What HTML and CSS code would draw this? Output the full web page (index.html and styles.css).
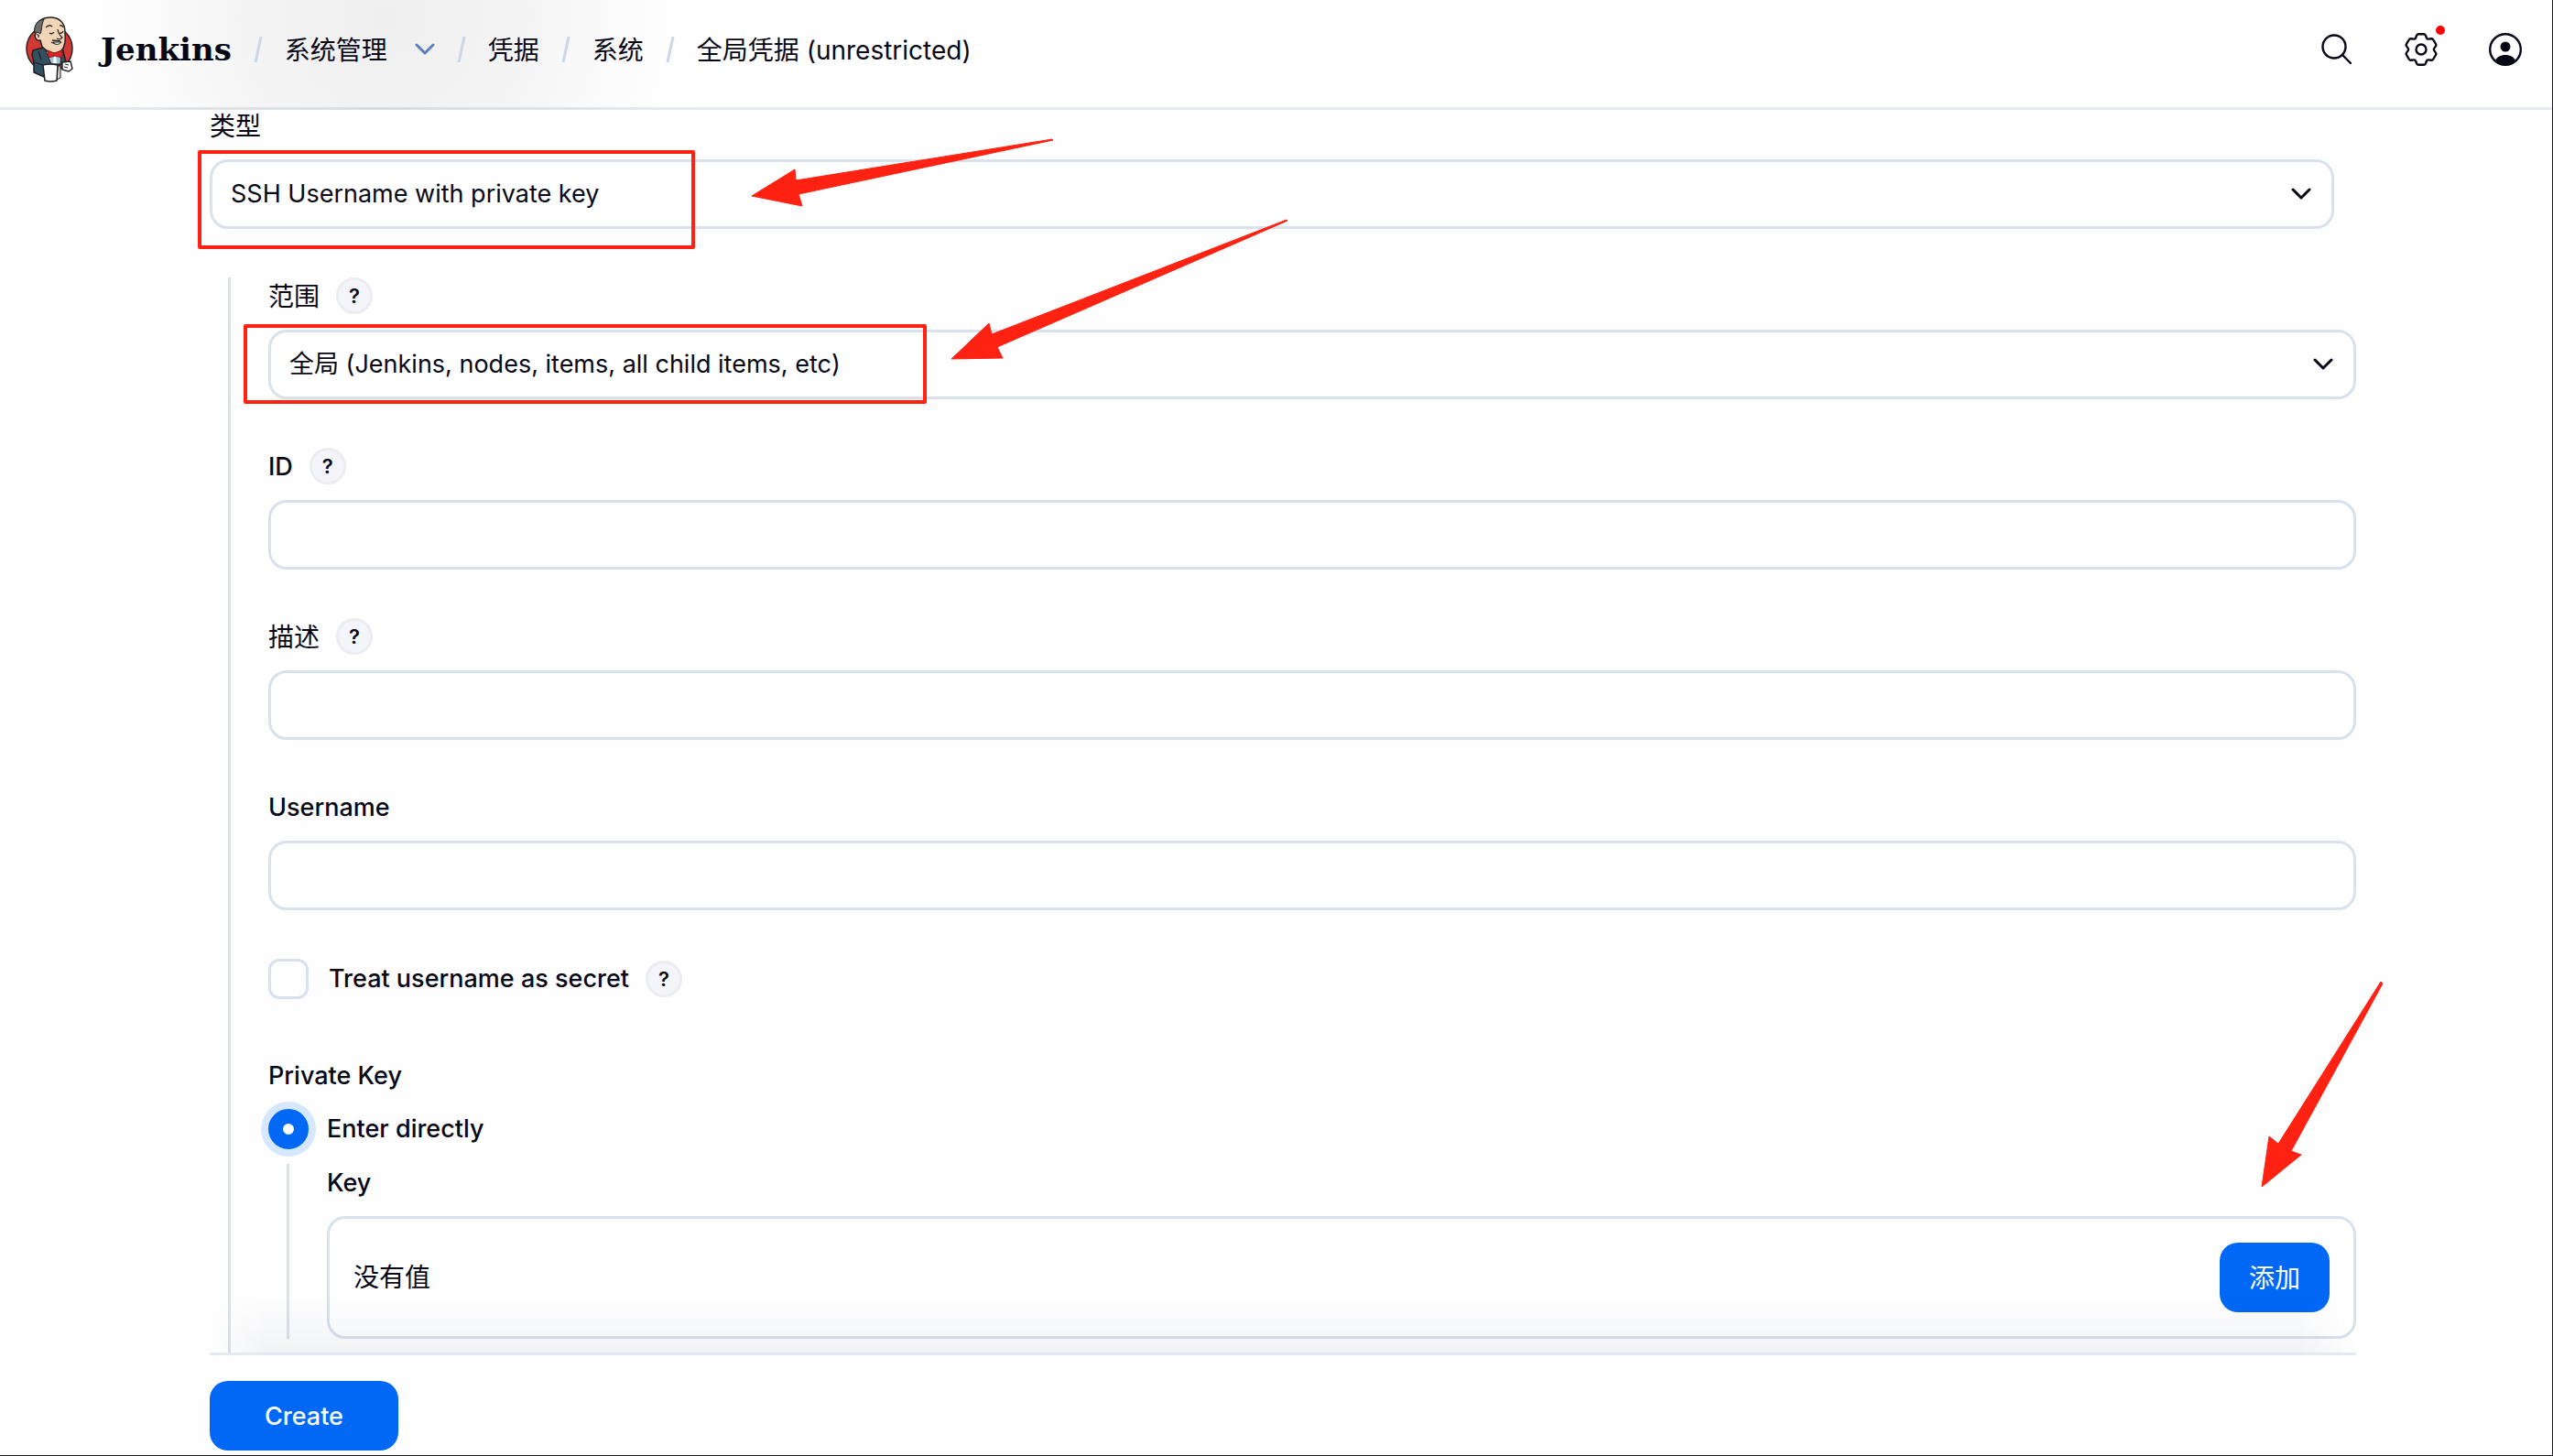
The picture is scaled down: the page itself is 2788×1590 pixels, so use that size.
FILE: index.html
```html
<!DOCTYPE html>
<html lang="zh-CN">

<head>
    <meta charset="UTF-8">
    <title>全局凭据 (unrestricted) - Jenkins</title>
    <link rel="stylesheet" href="styles.css">
</head>

<body>
    <header class="header">
        <a class="brand" href="#">
            <svg class="logo" viewBox="0 0 52 72" aria-hidden="true">
                <ellipse cx="26" cy="35" rx="25" ry="25" fill="#d33833" stroke="#2b2224" stroke-width="1.5" />
                <path d="M8 37 L19 34 L40 34 L44 50 L37 53 L37 66 L20 66 L9 61 L9 50 L7 42 Z" fill="#335061" stroke="#1d1f21" stroke-width="1.5" />
                <path d="M22 38 L28 52 L38 52 L39 38 Z" fill="#9fc3d8" stroke="#1d1f21" />
                <path d="M31 42 L30 51 L34 51 L33 42 Z" fill="#fff" />
                <path d="M10 17 C10 6 18 1 27 1 C37 1 43 7 43 17 C44 28 43 38 34 40 C27 41 21 36 18 33 L16 26 C11 27 9 22 11 18 Z" fill="#f0d6b7" stroke="#1d1f21" stroke-width="1.5" />
                <path d="M10 18 C8 9 15 3 20 3 C17 8 18 15 16 19 C14 17 12 17 10 18 Z" fill="#6d6b6d" stroke="#1d1f21" />
                <path d="M12 20 Q15 19 14 23 M22 12 Q26 8 29 11 M37 10 Q40 9 41 12 M26 18 Q29 20 31 17 M37 18 Q40 19 41 16 M35 14 Q36 20 40 23 Q38 26 34 24 M28 28 Q34 32 39 28 M29 26 L38 27" fill="none" stroke="#2b2224" stroke-width="1.3" />
                <path d="M30 28 Q34 33 39 28 Z" fill="#fff" stroke="#2b2224" />
                <path d="M24 37 L31 40 L40 37 L40 45 L32 43 L25 45 Z" fill="#e12126" stroke="#811c1d" />
                <path d="M40 50 L49 49 L51 57 L47 60 L40 58 Z" fill="#fff" stroke="#1d1f21" stroke-width="1.4" />
                <path d="M43 52 L47 53 M42 55 L46 56" stroke="#1d1f21" />
                <path d="M35 54 L38 54 L38 67 L34 69 Z" fill="#dcd9d8" stroke="#1d1f21" />
                <path d="M19 53 Q27 51 35 53 L34 70 Q27 72 21 70 Z" fill="#fff" stroke="#1d1f21" stroke-width="1.5" />
                <path d="M19 53 L9 50 M14 38 L17 47" stroke="#1d1f21" stroke-width="1.2" />
            </svg>
            <span class="brand-name">Jenkins</span>
        </a>
        <nav class="breadcrumbs">
            <svg class="slash" viewBox="0 0 10 30"><path d="M8 1 L2 29" /></svg>
            <a href="#">系统管理</a>
            <button class="crumb-menu" aria-label="展开">
                <svg viewBox="0 0 22 14"><path d="M2 2 L11 11 L20 2" /></svg>
            </button>
            <svg class="slash" viewBox="0 0 10 30"><path d="M8 1 L2 29" /></svg>
            <a href="#">凭据</a>
            <svg class="slash" viewBox="0 0 10 30"><path d="M8 1 L2 29" /></svg>
            <a href="#">系统</a>
            <svg class="slash" viewBox="0 0 10 30"><path d="M8 1 L2 29" /></svg>
            <a href="#">全局凭据 (unrestricted)</a>
        </nav>
        <div class="actions">
            <button class="icon-button" aria-label="搜索">
                <svg viewBox="0 0 36 36"><circle cx="15" cy="15" r="12.5" /><path d="M24 24 L33 33" /></svg>
            </button>
            <button class="icon-button" aria-label="系统管理">
                <svg viewBox="0 0 36 36">
                    <path d="M15 1.300H21Q22.500 1.300 23 3L24 5.500Q24.500 6.800 26 6.600L29 6.200Q30.500 6 31.300 7.500L34 12Q34.800 13.400 33.800 14.600L32.300 16.600Q31.500 18 32.300 19.400L33.800 21.400Q34.800 22.600 34 24L31.300 28.500Q30.500 30 29 29.800L26 29.400Q24.500 29.200 24 30.500L23 33Q22.500 34.700 21 34.700H15Q13.500 34.700 13 33L12 30.500Q11.500 29.200 10 29.400L7 29.800Q5.500 30 4.700 28.500L2 24Q1.200 22.600 2.200 21.400L3.700 19.400Q4.500 18 3.700 16.600L2.200 14.600Q1.200 13.400 2 12L4.700 7.500Q5.500 6 7 6.200L10 6.600Q11.500 6.800 12 5.500L13 3Q13.500 1.300 15 1.300Z" />
                    <circle cx="18" cy="18" r="5.500" />
                </svg>
                <span class="badge"></span>
            </button>
            <button class="icon-button" aria-label="用户">
                <svg viewBox="0 0 36 36">
                    <circle cx="18" cy="18" r="16.800" />
                    <circle class="solid" cx="18" cy="15" r="5.500" />
                    <path class="solid" d="M7 30 C9 26 13 24 18 24 C23 24 27 26 29 30 C23 36 13 36 7 30 Z" />
                </svg>
            </button>
        </div>
    </header>

    <main class="content">
        <div class="field field-type">
            <div class="label-row"><label for="type">类型</label></div>
            <div class="select">
                <select id="type">
                    <option>SSH Username with private key</option>
                </select>
                <svg viewBox="0 0 22 14"><path d="M2 2 L11 11 L20 2" /></svg>
            </div>
            <div class="mark mark-type"></div>
            <svg class="arrow arrow-type" viewBox="0 0 330 74">
                <path d="M0 62 L47 33 L48 45 L328 0 L329 1 L51 60 L55 73 Z" />
            </svg>
        </div>

        <div class="nested nested-main">
            <div class="field">
                <div class="label-row">
                    <label for="scope">范围</label>
                    <button class="help" aria-label="帮助">?</button>
                </div>
                <div class="select">
                    <select id="scope">
                        <option>全局 (Jenkins, nodes, items, all child items, etc)</option>
                    </select>
                    <svg viewBox="0 0 22 14"><path d="M2 2 L11 11 L20 2" /></svg>
                </div>
                <div class="mark mark-scope"></div>
                <svg class="arrow arrow-scope" viewBox="0 0 368 154">
                    <path d="M0 152 L41 113 L44 125 L366 0 L367 1 L50 139 L56 151 Z" />
                </svg>
            </div>

            <div class="field">
                <div class="label-row">
                    <label class="latin" for="id">ID</label>
                    <button class="help" aria-label="帮助">?</button>
                </div>
                <input class="input" id="id" type="text">
            </div>

            <div class="field">
                <div class="label-row">
                    <label for="description">描述</label>
                    <button class="help" aria-label="帮助">?</button>
                </div>
                <input class="input" id="description" type="text">
            </div>

            <div class="field">
                <div class="label-row"><label class="latin" for="username">Username</label></div>
                <input class="input" id="username" type="text">
            </div>

            <div class="check-row">
                <input class="checkbox" id="secret" type="checkbox">
                <label class="latin" for="secret">Treat username as secret</label>
                <button class="help" aria-label="帮助">?</button>
            </div>

            <div class="field">
                <div class="label-row"><span class="latin">Private Key</span></div>
                <div class="radio-row">
                    <input class="radio" id="direct" type="radio" name="key" checked>
                    <label class="latin" for="direct">Enter directly</label>
                </div>
                <div class="nested nested-key">
                    <div class="label-row"><span class="latin">Key</span></div>
                    <div class="secret-box">
                        <span>没有值</span>
                        <button class="button">添加</button>
                        <svg class="arrow arrow-add" viewBox="0 0 132 226">
                            <path d="M0 224 L8 169 L18 177 L130 0 L132 2 L32 185 L43 189 Z" />
                        </svg>
                    </div>
                </div>
            </div>
        </div>
    </main>

    <footer class="bottom-bar">
        <button class="button button-create latin">Create</button>
    </footer>
</body>

</html>
```
FILE: styles.css
```css
* {
    box-sizing: border-box;
}

body {
    margin: 0;
    height: 100vh;
    display: flex;
    flex-direction: column;
    overflow: hidden;
    background-color: #fefefe;
    border-right: 1px solid #1c1c1e;
    border-bottom: 1px solid #1c1c1e;
    color: #070716;
    font-family: Inter, "Noto Sans CJK SC", sans-serif;
    font-size: 28px;
    line-height: 40px;
}

button,
input,
select {
    font: inherit;
    color: inherit;
    margin: 0;
}

button {
    border: 0;
    padding: 0;
    background: none;
    cursor: pointer;
}

a {
    color: inherit;
    text-decoration: none;
}

.latin {
    font-size: 27px;
    font-weight: 500;
}

/* header */
.header {
    position: relative;
    z-index: 1;
    flex: none;
    display: flex;
    align-items: center;
    height: 120px;
    padding: 0 33px 9px 28px;
    border-bottom: 3px solid rgba(40, 70, 130, 0.11);
    background: radial-gradient(ellipse 340px 320px at 420px 20px, #efefef, #f4f4f4 45%, #fbfbfb 75%, #ffffff) #ffffff;
}

.brand {
    display: flex;
    align-items: center;
    gap: 30px;
    margin-right: 24px;
}

.logo {
    width: 52px;
    height: 72px;
}

.brand-name {
    font-family: "DejaVu Serif", serif;
    font-size: 34px;
    font-weight: bold;
}

.breadcrumbs {
    display: flex;
    align-items: center;
    gap: 24px;
}

.breadcrumbs a {
    padding-top: 2px;
}

.slash {
    width: 10px;
    height: 30px;
    fill: none;
    stroke: #ccd7e6;
    stroke-width: 3;
}

.crumb-menu {
    display: flex;
    padding-left: 6px;
}

.crumb-menu svg {
    width: 22px;
    height: 14px;
    fill: none;
    stroke: #5b82b8;
    stroke-width: 3;
    stroke-linecap: round;
    stroke-linejoin: round;
}

.actions {
    display: flex;
    gap: 56px;
    margin-left: auto;
}

.icon-button {
    position: relative;
    display: flex;
}

.icon-button svg {
    width: 36px;
    height: 36px;
    fill: none;
    stroke: #070716;
    stroke-width: 2.4;
    stroke-linecap: round;
    stroke-linejoin: round;
}

.icon-button .solid {
    fill: #070716;
    stroke: none;
}

.badge {
    position: absolute;
    top: -8px;
    right: -8px;
    width: 10px;
    height: 10px;
    border-radius: 50%;
    background-color: #ff0000;
}

/* form */
.content {
    flex: 1;
    min-height: 0;
    margin-top: -3px;
    padding: 0 214px 0 229px;
    overflow: hidden;
}

.field {
    position: relative;
    margin-bottom: 53px;
}

.field-type {
    margin-right: 24px;
}

.label-row {
    display: flex;
    align-items: center;
    gap: 18px;
    height: 40px;
    margin-bottom: 17px;
}

.label-row label,
.label-row span {
    padding-top: 2px;
}

.help {
    width: 40px;
    height: 40px;
    border: 3px solid #ededf1;
    border-radius: 50%;
    background-color: #f4f5fa;
    font-size: 22px;
    font-weight: 600;
    line-height: 34px;
    text-align: center;
}

.input,
.select select {
    display: block;
    width: 100%;
    height: 76px;
    padding: 0 20px;
    border: 3px solid #d9e1ec;
    border-radius: 20px;
    background-color: #ffffff;
    font-size: 27px;
    appearance: none;
}

.select {
    position: relative;
}

.select svg {
    position: absolute;
    top: 31px;
    right: 25px;
    width: 22px;
    height: 14px;
    fill: none;
    stroke: #070716;
    stroke-width: 3;
    stroke-linecap: round;
    stroke-linejoin: round;
}

.nested {
    margin-left: 20px;
    padding-left: 41px;
    border-left: 3px solid #d9e1ec;
}

.nested-main {
    height: 100%;
}

.nested-key {
    margin-top: 16px;
}

.check-row,
.radio-row {
    display: flex;
    align-items: center;
}

.check-row {
    margin-bottom: 63px;
}

.check-row label {
    margin: 0 18px 0 22px;
}

.radio-row label {
    margin-left: 20px;
}

.checkbox,
.radio {
    width: 44px;
    height: 44px;
    appearance: none;
}

.checkbox {
    border: 3px solid #d9e1ec;
    border-radius: 12px;
    background-color: #ffffff;
}

.radio {
    border: 16px solid #0068f5;
    border-radius: 50%;
    background-color: #ffffff;
    box-shadow: 0 0 0 8px #d6e8ff;
}

.secret-box {
    position: relative;
    display: flex;
    align-items: center;
    justify-content: space-between;
    padding: 26px;
    border: 3px solid #d9e1ec;
    border-radius: 20px;
    background-color: #ffffff;
}

.button {
    height: 76px;
    padding: 2px 32px 0;
    border-radius: 20px;
    background-color: #0068f5;
    color: #ffffff;
}

.button-create {
    padding: 2px 60px 0;
}

/* bottom bar */
.bottom-bar {
    position: relative;
    flex: none;
    margin: 0 214px 0 229px;
    padding: 28px 0 5px;
    border-top: 3px solid #e4e9f2;
}

.bottom-bar::before {
    content: "";
    position: absolute;
    right: 0;
    bottom: 100%;
    left: 0;
    height: 65px;
    margin-bottom: 3px;
    background: linear-gradient(rgba(40, 60, 110, 0), rgba(40, 60, 110, 0.06));
    mask-image: linear-gradient(to right, transparent, #000 60px, #000 calc(100% - 60px), transparent);
    pointer-events: none;
}

/* annotations */
.mark {
    position: absolute;
    border: 4px solid #ff2111;
    border-radius: 2px;
    pointer-events: none;
}

.mark-type {
    top: 47px;
    left: -13px;
    width: 543px;
    height: 108px;
}

.mark-scope {
    top: 51px;
    left: -27px;
    width: 746px;
    height: 87px;
}

.arrow {
    position: absolute;
    fill: #ff2111;
    stroke: #ff2111;
    stroke-width: 1;
    stroke-linejoin: round;
    overflow: visible;
    pointer-events: none;
}

.arrow-type {
    top: 35px;
    left: 592px;
    width: 330px;
    height: 74px;
}

.arrow-scope {
    top: -63px;
    left: 746px;
    width: 368px;
    height: 154px;
}

.arrow-add {
    top: -259px;
    right: -32px;
    width: 132px;
    height: 226px;
}
```
